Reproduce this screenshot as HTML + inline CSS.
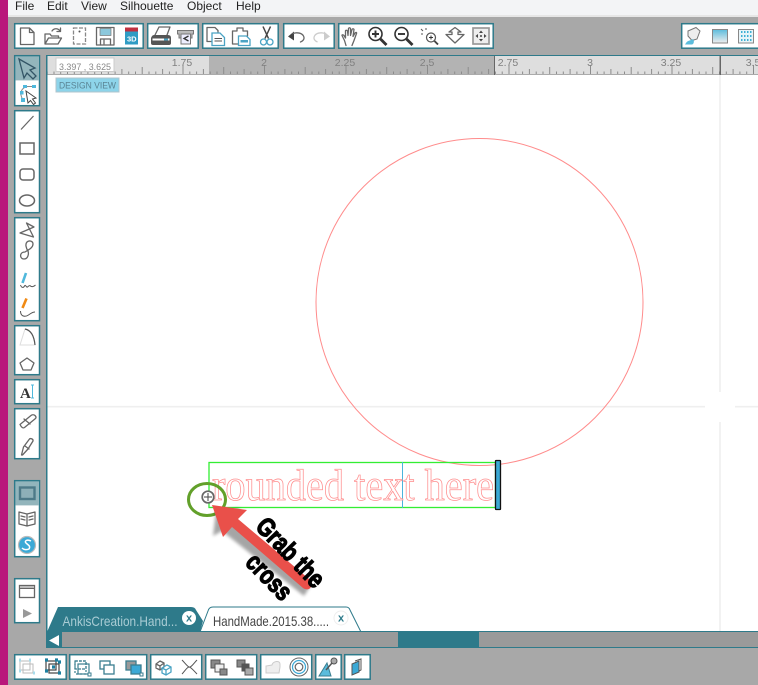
<!DOCTYPE html>
<html><head><meta charset="utf-8"><style>
html,body{margin:0;padding:0;width:758px;height:685px;overflow:hidden;background:#a8a8a8}
svg{display:block;font-family:"Liberation Sans",sans-serif}
.g{fill:#fff;stroke:#2e7a8a;stroke-width:1.5}
.i{fill:none;stroke:#666;stroke-width:1.3;stroke-linejoin:round;stroke-linecap:round}
.b{fill:none;stroke:#4aa3c4;stroke-width:1.3}
.m{font-size:12px;fill:#222}
.r{font-size:10.5px;fill:#808080;text-anchor:middle}
</style></head><body>
<svg width="758" height="685" viewBox="0 0 758 685" xmlns="http://www.w3.org/2000/svg">
<defs>
<pattern id="t" x="19.5" y="56" width="81.5" height="19" patternUnits="userSpaceOnUse">
<path d="M.5 19V9M7.3 19v-3.5M14.1 19v-3.5M20.900 19v-6M27.700 19v-3.500M34.500 19v-3.500M41.200 19v-8M48 19v-3.500M54.800 19v-3.500M61.600 19v-6M68.400 19v-3.500M75.200 19v-3.500" stroke="#8c8c8c" stroke-width="1" fill="none"/>
</pattern>
<filter id="s" x="-20%" y="-20%" width="150%" height="150%"><feGaussianBlur stdDeviation="1.5"/></filter>
<linearGradient id="gr" x1="0" y1="0" x2="0" y2="1"><stop offset="0" stop-color="#5bbcdc"/><stop offset="1" stop-color="#eee"/></linearGradient>
</defs>

<rect width="758" height="685" fill="#a8a8a8"/>
<rect width="758" height="15" fill="#f3f4f6"/>
<rect y="15" width="758" height="2" fill="#e6e6e6"/>
<rect width="8" height="685" fill="#b9177b"/>

<text x="15" y="10" class="m">File</text>
<text x="47" y="10" class="m">Edit</text>
<text x="81" y="10" class="m">View</text>
<text x="120" y="10" class="m">Silhouette</text>
<text x="187" y="10" class="m">Object</text>
<text x="236" y="10" class="m">Help</text>

<!-- top toolbars -->
<rect class="g" x="14.700" y="23.700" width="128.500" height="24.500"/>
<rect class="g" x="147.700" y="23.700" width="50.500" height="24.500"/>
<rect class="g" x="202.700" y="23.700" width="75.500" height="24.500"/>
<rect class="g" x="283.700" y="23.700" width="50.500" height="24.500"/>
<rect class="g" x="338.700" y="23.700" width="154.500" height="24.500"/>
<rect class="g" x="681.700" y="23.700" width="90" height="24.500"/>

<!-- new doc -->
<path class="i" d="M20.500 28h9l4.500 4.500V44.500H20.500zM29.500 28v4.500h4.500"/>
<!-- open -->
<path class="i" d="M45 44V34h5l1.500 2h7v2M45 44l3.500-6h13l-3.500 6zM52 31c2-3 6-3 8 0M60.500 28v3.500h-3.500"/>
<!-- page -->
<path fill="none" stroke="#888" stroke-width="1.300" stroke-dasharray="4 1.500" d="M73.500 28h12v16h-12z"/><circle cx="79.500" cy="31.500" r="1" fill="#555"/>
<!-- save -->
<path class="i" d="M96.500 27.500h17.500v17.500H96.500z"/><rect x="100" y="28.500" width="11" height="7" fill="#8cc8dc" stroke="#777" stroke-width=".7"/><path class="i" d="M100.500 45v-6h10v6M104 40v4"/>
<!-- 3D -->
<rect x="125" y="27.500" width="13" height="17" fill="#2f9cc4"/><rect x="125" y="27.500" width="13" height="4" fill="#c03040"/>
<text x="127" y="41.500" font-size="7.500" font-weight="bold" fill="#fff">3D</text>
<!-- printer -->
<path class="i" d="M155 35l4-8h11l-3 8" stroke-width="1.200"/><path d="M151 38q1-3 3-3h14q3 0 3 3v5q0 2-2 2h-16q-2 0-2-2z" fill="#555"/><rect x="152.500" y="38.500" width="17" height="2" fill="#fff"/><rect x="164" y="38.500" width="4" height="2" fill="#4aa3c4"/>
<!-- cutter -->
<path d="M177.500 30.500h16v3.500h-1.500v4h-13v-4h-1.500z" fill="#bbb" stroke="#777"/><rect x="181" y="34" width="9.500" height="10" fill="#eef" stroke="#777"/><path d="M188.500 36l-4.500 2.500 4.500 2.500" fill="none" stroke="#333" stroke-width="1.300"/>
<!-- copy -->
<path class="i" d="M207 27.500h8l3 3v2.500M207 27.500v14h4.500"/><path class="b" d="M212 33h8l4.500 4.500v8H212z"/><path d="M214.500 38.500h7.500M214.500 41h7.500" stroke="#555"/>
<!-- paste -->
<path class="i" d="M232.500 31h4.500v-3h6v3h4.500v5M232.500 31v13h6"/><path class="b" d="M238.500 36h8l3.500 3.500v6h-11.500z"/><rect x="240.500" y="40" width="7.500" height="2.500" fill="#4aa3c4"/>
<!-- scissors -->
<path d="M263 26.500l5.500 12M270.500 26.500l-5.500 12" stroke="#444" stroke-width="1.500" fill="none"/><circle cx="263.500" cy="42" r="3" class="b" stroke-width="1.500"/><circle cx="270" cy="42" r="3" class="b" stroke-width="1.500"/>
<!-- undo -->
<path d="M288 36.500l6-5v9z" fill="#444"/><path class="i" d="M293 33.500c4-1.500 9-.5 10.500 2.500s-.5 5-3 6"/>
<!-- redo -->
<path d="M330 36.500l-6-5v9z" fill="#ccc"/><path fill="none" stroke="#ccc" stroke-width="1.300" d="M325 33.500c-4-1.500-9-.5-10.500 2.500s.5 5 3 6"/>
<!-- hand -->
<path class="i" d="M346 45.500l-1.500-5-2.500-5c0-1 1-1 2 0l1.500 2.500 0-7c0-1 1.500-1 2 0l.5 4.500 .5-7c.5-1 1.500-1 2 0l0 7 1.500-6c.5-1 1.800-1 2 0l-1 7 2-3.500c1-1 2-.5 1.500 .5l-2.500 7-2 5"/>
<!-- zoom in -->
<circle cx="375.500" cy="34" r="6.500" fill="none" stroke="#333" stroke-width="1.600"/><path d="M372 34h7M375.500 30.500v7" stroke="#333" stroke-width="1.900"/><path d="M380.500 39l6 6" stroke="#333" stroke-width="2.800"/>
<!-- zoom out -->
<circle cx="401.500" cy="34" r="6.500" fill="none" stroke="#333" stroke-width="1.600"/><path d="M398 34h7" stroke="#333" stroke-width="1.900"/><path d="M406.500 39l6 6" stroke="#333" stroke-width="2.800"/>
<!-- zoom select -->
<circle cx="431" cy="37.500" r="4.500" fill="none" stroke="#555" stroke-width="1.200"/><path d="M429 37.500h4M431 35.500v4" stroke="#333"/><path d="M434.500 41l3.500 3.500" stroke="#444" stroke-width="1.900"/><path d="M421 29l2 2M426 28v2M421 34h2" stroke="#555"/>
<!-- zoom arrows -->
<path class="i" d="M455 27.500l-6 4.500h3v2.500h-6l9 8.500 9-8.500h-6v-2.500h3z"/>
<!-- fit -->
<rect x="473" y="28" width="16" height="16" fill="#eee" stroke="#999" stroke-width="1.700"/><path d="M481 30.500l2 2.500h-4zM481 41.500l2-2.500h-4zM475.500 36l2.500-2v4zM486.500 36l-2.500-2v4z" fill="#444"/><circle cx="481" cy="36" r="1" fill="#444"/>
<!-- paint -->
<path d="M688 31l8-3.500 4 3.500-3 8-5 1.500-4-4.500z" fill="#eee" stroke="#777"/><path d="M686 43c2-3 4-2 7-4 1.500 2 1 5-1 5.500h-7z" fill="#5bbcdc"/>
<!-- gradient -->
<rect x="712.500" y="29.500" width="15" height="13.500" fill="url(#gr)" stroke="#888"/>
<!-- pattern -->
<rect x="738.500" y="29.500" width="15" height="13.500" fill="#e8f4f8" stroke="#888"/>
<path d="M741 32h1.500m1.500 0h1.500m1.500 0h1.500m1.500 0h1.500M741 36h1.500m1.500 0h1.500m1.500 0h1.500m1.500 0h1.500M741 40h1.500m1.500 0h1.500m1.500 0h1.500m1.500 0h1.500" stroke="#3fb0d4" stroke-width="2"/>

<!-- canvas -->
<rect x="46" y="55" width="712" height="577" fill="#fff"/>
<rect x="46" y="55" width="712" height="1" fill="#2e7a8a"/>
<rect x="46" y="55" width="1.500" height="577" fill="#2e7a8a"/>
<rect x="47.500" y="56" width="711" height="19" fill="#dedede"/>
<rect x="209" y="56" width="285" height="19" fill="#b3b3b3"/>
<rect x="47.500" y="56" width="711" height="19" fill="url(#t)"/>
<rect x="47.500" y="74" width="711" height="1" fill="#ababab"/>
<rect x="494" y="56" width="1" height="19" fill="#666"/>
<rect x="719.500" y="56" width="1.500" height="19" fill="#666"/>
<text x="182" y="66" class="r">1.75</text>
<text x="264" y="66" class="r">2</text>
<text x="345" y="66" class="r">2.25</text>
<text x="427" y="66" class="r">2.5</text>
<text x="508" y="66" class="r">2.75</text>
<text x="590" y="66" class="r">3</text>
<text x="671" y="66" class="r">3.25</text>
<text x="753" y="66" class="r">3.5</text>
<rect x="56" y="58" width="58" height="13.500" fill="#fff" stroke="#ccc"/>
<text x="59" y="70" font-size="9.500" fill="#888" textLength="52" lengthAdjust="spacingAndGlyphs">3.397 , 3.625</text>
<rect x="56" y="78" width="63" height="14" fill="#8dd4ea" stroke="#b0c4cc"/>
<text x="59" y="88.500" font-size="9.500" fill="#5a8494" textLength="57" lengthAdjust="spacingAndGlyphs">DESIGN VIEW</text>

<!-- crosshair -->
<path d="M47.500 406.700H705M735 406.700H758M720 75V392M720 422V631" stroke="#efefef" stroke-width="1.600" fill="none"/>

<!-- circle -->
<circle cx="479.500" cy="302" r="163.500" fill="none" stroke="#ff8c8c" stroke-width="1"/>

<!-- text box -->
<rect x="209" y="462.500" width="286.500" height="45" fill="none" stroke="#33ee33" stroke-width="1.300"/>
<path d="M402.500 462v46" stroke="#4ab4dc" stroke-width="1"/>
<text x="212" y="500" font-family="Liberation Serif" font-size="44" textLength="282" lengthAdjust="spacingAndGlyphs" fill="#fff" stroke="#ff8f8f" stroke-width=".8">rounded text here</text>
<rect x="495.500" y="460.500" width="5" height="49" fill="#3aa9d4" stroke="#111" stroke-width="1.300" rx=".5"/>

<!-- cross + ellipse -->
<circle cx="208" cy="497" r="5.800" fill="#fff" stroke="#666" stroke-width="1.700"/>
<path d="M208 493v8M204 497h8" stroke="#444" stroke-width="1"/>
<ellipse cx="207" cy="499.500" rx="18.500" ry="16" fill="none" stroke="#62a02a" stroke-width="3"/>

<!-- arrow -->
<path d="M215 510l-3 25 9-5 82 65 7-11-81-68 11-9z" fill="#000" opacity=".35" filter="url(#s)" transform="translate(1 1)"/>
<path d="M212 505l11 32 9-10 71 61c3 2 6 2 8-1s1-6-2-8l-71-60 9-9z" fill="#e9504a"/>
<g transform="translate(290 553) rotate(46)" font-weight="bold" fill="#000" stroke="#000" stroke-width="1.300" text-anchor="middle">
<text x="0" y="8" font-size="26" textLength="86" lengthAdjust="spacingAndGlyphs">Grab the</text>
</g>
<g transform="translate(268 578) rotate(46)" font-weight="bold" fill="#000" stroke="#000" stroke-width="1.300" text-anchor="middle">
<text x="0" y="7" font-size="26" textLength="54" lengthAdjust="spacingAndGlyphs">cross</text>
</g>

<!-- left toolbars -->
<rect class="g" x="14.700" y="55.700" width="24.800" height="50"/>
<rect x="15.400" y="56.400" width="23.400" height="24" fill="#93b5bc"/>
<rect class="g" x="14.700" y="110.700" width="24.800" height="102"/>
<rect class="g" x="14.700" y="217.700" width="24.800" height="103"/>
<rect class="g" x="14.700" y="325.700" width="24.800" height="49"/>
<rect class="g" x="14.700" y="379.700" width="24.800" height="24"/>
<rect class="g" x="14.700" y="408.700" width="24.800" height="50"/>
<rect class="g" x="14.700" y="480.700" width="24.800" height="76"/>
<rect x="15.400" y="481.400" width="23.400" height="24" fill="#93b5bc"/>
<rect class="g" x="14.700" y="578.700" width="24.800" height="44"/>

<!-- select -->
<path d="M19 59l16 9-5 2 6 6-3 3-6-6-3 5z" fill="none" stroke="#356" stroke-width="1.300"/>
<!-- node -->
<path d="M22.500 99c-3-5-2-11 5-12.500h6" fill="none" stroke="#888"/><rect x="20" y="91" width="3.500" height="3.500" fill="#4fb8dc"/><rect x="23" y="85" width="4" height="3" fill="#4fb8dc"/><rect x="32" y="85" width="4" height="3" fill="#4fb8dc"/><rect x="21" y="98" width="4" height="4" fill="#4fb8dc"/>
<path d="M26 91l10 7-3.500 1 3 4-2 1.500-3-4-2.500 2.500z" fill="#fff" stroke="#444"/>
<!-- line -->
<path d="M21 129.500l12.500-13.500" stroke="#666" stroke-width="1.200"/>
<!-- rect -->
<rect x="20" y="143" width="14" height="11" fill="none" stroke="#666" stroke-width="1.500"/>
<rect x="20" y="169" width="14" height="11" rx="3" fill="none" stroke="#666" stroke-width="1.500"/>
<ellipse cx="27" cy="200.500" rx="7.500" ry="5.500" fill="none" stroke="#666" stroke-width="1.500"/>
<!-- bowtie -->
<path class="i" d="M26.500 223L34 227 20 233 33.500 237z"/>
<!-- figure eight -->
<path class="i" d="M25 252c3-2 8-4 8-8 0-3-4-4-6-2-2 2-1 6 1 9 1 3 0 8-4 8-3 0-4-3-3-5 1-2 3-2 4-2z"/>
<!-- freehand -->
<path d="M22.500 283l3.500-10" stroke="#4fb8dc" stroke-width="2.600"/><path d="M20.500 285c1 3 3 3 4 1s2 2 3 1 2-2 3-1 3 1 5-1" fill="none" stroke="#555"/>
<!-- smooth -->
<path d="M22.500 308l4-9.500" stroke="#f08a14" stroke-width="2.600"/><path d="M20.500 311c0 6 5 6 8 4s4-3 6.500-3" fill="none" stroke="#555"/>
<!-- arc -->
<path d="M20 345l5-16c5 1 9 6 10 16z" fill="none" stroke="#ddd"/><path d="M25 329c5 1 9 6 10 16" fill="none" stroke="#555" stroke-width="1.200"/>
<!-- pentagon -->
<path class="i" d="M27 358l7 5-3 7h-8l-3-7z"/>
<!-- A -->
<text x="20" y="398" font-family="Liberation Serif" font-size="15" font-weight="bold" fill="#333">A</text>
<path d="M32.500 385v13M31 385h3M31 398h3" stroke="#4fb8dc"/>
<!-- eraser -->
<path class="i" d="M20 424.500l11-9c1-1 3-1 4 0s1.500 2 .5 3l-11 9c-1.500 1-3 0-4.500-3zM24 419l6 5"/>
<!-- knife -->
<path class="i" d="M21.500 455l2-8 6-8c1-1 4 0 3.500 2l-5 8-5.500 6zM25 446l4 3"/>
<!-- view -->
<rect x="20" y="487.500" width="14.500" height="11.500" fill="#8eb0b8" stroke="#4e7a88" stroke-width="2.400"/>
<!-- book -->
<path class="i" d="M19 512l8 2 8-2v12l-8 2-8-2zM27 514v12M21 516l4 1M21 519l4 1M29 517l4-1M29 520l4-1" stroke="#888"/>
<!-- S -->
<circle cx="27" cy="545" r="8.500" fill="#3ba9d6" stroke="#bbb" stroke-width="1.200"/>
<path d="M31 541c-4-2-7 0-5 2s5 3 3 6c-2 1-5 1-7-1" fill="none" stroke="#fff" stroke-width="1.500"/>
<!-- window -->
<rect x="19.500" y="585.500" width="15" height="12" fill="#fff" stroke="#666" stroke-width="1.300"/><rect x="19.500" y="585.500" width="15" height="3" fill="#bbb" stroke="#666"/>
<path d="M23 609l9 4.500-9 4.500z" fill="#999"/>

<!-- tabs -->
<path d="M47 632L58 607H191q4 0 5 3L203 621L200 632z" fill="#2e7a8a"/>
<path d="M200 632L208 611q1-4 5-4H346q3 0 4 3L361 632z" fill="#fff" stroke="#2e7a8a" stroke-width="1"/>
<text x="62.500" y="626" font-size="14" fill="#a9ccd4" textLength="115" lengthAdjust="spacingAndGlyphs">AnkisCreation.Hand...</text>
<text x="213" y="626" font-size="14" fill="#444" textLength="116" lengthAdjust="spacingAndGlyphs">HandMade.2015.38.....</text>
<circle cx="189" cy="618" r="7" fill="#fff"/><text x="189" y="621.500" font-size="11" font-weight="bold" fill="#2e7a8a" text-anchor="middle">x</text>
<circle cx="341" cy="618" r="7" fill="#fff" stroke="#eee"/><text x="341" y="621.500" font-size="11" font-weight="bold" fill="#2e7a8a" text-anchor="middle">x</text>

<!-- scrollbar -->
<rect x="46" y="631" width="712" height="17" fill="#2e7a8a"/>
<rect x="62" y="632" width="696" height="15" fill="#9a9a9a"/>
<rect x="398" y="632" width="81" height="15" fill="#2e7a8a"/>
<path d="M49 640.500l10-5.500v11z" fill="#fff"/>

<!-- bottom toolbars -->
<rect class="g" x="14.700" y="654.700" width="51.500" height="24.500"/>
<rect class="g" x="69.700" y="654.700" width="77" height="24.500"/>
<rect class="g" x="150.700" y="654.700" width="51" height="24.500"/>
<rect class="g" x="205.700" y="654.700" width="51" height="24.500"/>
<rect class="g" x="260.700" y="654.700" width="51" height="24.500"/>
<rect class="g" x="315.700" y="654.700" width="25.500" height="24.500"/>
<rect class="g" x="344.700" y="654.700" width="25.500" height="24.500"/>

<!-- bottom icons -->
<g fill="none" stroke="#bbb"><rect x="20" y="661" width="10" height="9"/><rect x="23" y="664" width="10" height="9"/></g>
<path d="M19 660h2m8 0h2M19 671h2M33 673h2" stroke="#a8dcec" stroke-width="3"/>
<g fill="none" stroke="#444" stroke-width="1.200"><rect x="46" y="661" width="10" height="9"/><rect x="49" y="664" width="10" height="9"/></g>
<path d="M45 660h3m7 0h3M45 671h3M52 667h3M58 673h3M58 662h3" stroke="#1c7fa0" stroke-width="3.200"/>
<g fill="none" stroke="#3a7e90" stroke-width="1.200"><rect x="75" y="661" width="11" height="8" stroke-dasharray="3 1"/><rect x="78" y="664" width="11" height="10"/><rect x="75" y="661" width="11" height="13" stroke-dasharray="2 2"/></g>
<rect x="88" y="673" width="3" height="3" fill="#fff" stroke="#3a7e90"/>
<g fill="none" stroke="#3a7e90" stroke-width="1.300"><rect x="100" y="661" width="10" height="8"/><rect x="104" y="665" width="10" height="9" fill="#fff"/></g>
<g stroke="#3a7e90" stroke-width="1.300"><rect x="126" y="661" width="10" height="9" fill="#999"/><rect x="131" y="665" width="10" height="9" fill="#3ba9d6"/></g>
<rect x="140" y="673" width="3" height="3" fill="#fff" stroke="#3a7e90"/>
<path class="i" d="M156 664l4-3 4 2v4l-4 3-4-2zM156 664l4 2 4-3M160 666v4" stroke="#666"/>
<path class="b" d="M162 668l5-3 4 2v5l-5 3-4-2zM162 668l4 2 5-3M166 670v5"/>
<path d="M182 660c3 3 5 6 7 7s5-4 8-7M182 674c3-3 5-7 7-7s5 4 8 7" fill="none" stroke="#555"/>
<g stroke="#555"><rect x="211" y="660" width="9" height="8" fill="#888"/><rect x="215" y="664" width="9" height="8" fill="#eee"/><rect x="220" y="669" width="7" height="6" fill="#888"/></g>
<g stroke="#555"><rect x="237" y="660" width="8" height="7" fill="#888"/><rect x="242" y="664" width="7" height="7" fill="#555"/><rect x="245" y="668" width="8" height="7" fill="#aaa"/></g>
<path d="M266 673v-7l6-1c1-4 8-5 8-1v3l-1 6z" fill="#eee" stroke="#ccc"/>
<circle cx="299" cy="667" r="9" fill="none" stroke="#666" stroke-width="1"/><circle cx="299" cy="667" r="6.500" fill="none" stroke="#3ba9d6" stroke-width="1.200"/><circle cx="299" cy="667" r="3.800" fill="none" stroke="#666" stroke-width="1.200"/>
<path d="M319 676l8-13 4 13z" fill="#5bbcdc" stroke="#3a7e90"/><path d="M326 670l6-7" stroke="#555" stroke-width="1.500"/><circle cx="334" cy="661" r="3" fill="#aaa" stroke="#555"/>
<path d="M352 664l7-3v11l-7 3z" fill="#3ba9d6" stroke="#555"/><path d="M355 661l6-2v11l-2 1" fill="none" stroke="#555"/>
</svg>
</body></html>
